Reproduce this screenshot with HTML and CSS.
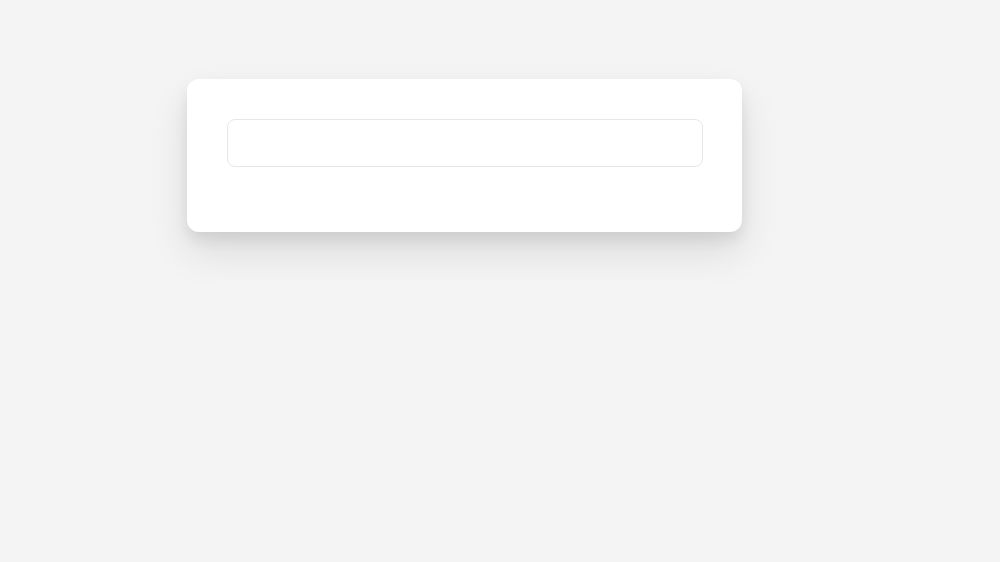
FILE: index.html
```html
<!DOCTYPE html>
<html>
<head>
    <title>Search</title>
    <link rel="stylesheet" href="styles.css">
</head>
<body>
    <div class="card">
        <input type="text" class="search-input" id="search-input">
        <div class="results" id="results"></div>
    </div>
</body>
</html>
```

FILE: styles.css
```css
html {
    background-color: #f4f4f4;
}
body {
    font-family: "Liberation Sans", Arial, sans-serif;
    margin: 0;
    min-height: 100vh;
    box-sizing: border-box;
    padding: 79px 0 0 187px;
    background-color: #f4f4f4;
}
.card {
    width: 555px;
    box-sizing: border-box;
    padding: 40px;
    background: white;
    border-radius: 12px;
    box-shadow: 0 20px 40px rgba(0,0,0,0.1), 0 8px 14px rgba(0,0,0,0.08);
}
.search-input {
    display: block;
    width: 476px;
    height: 48px;
    box-sizing: border-box;
    padding: 12px 16px;
    border: 1px solid #e5e7eb;
    border-radius: 8px;
    font-size: 16px;
    outline: none;
}
.results {
    height: 25px;
}
```
